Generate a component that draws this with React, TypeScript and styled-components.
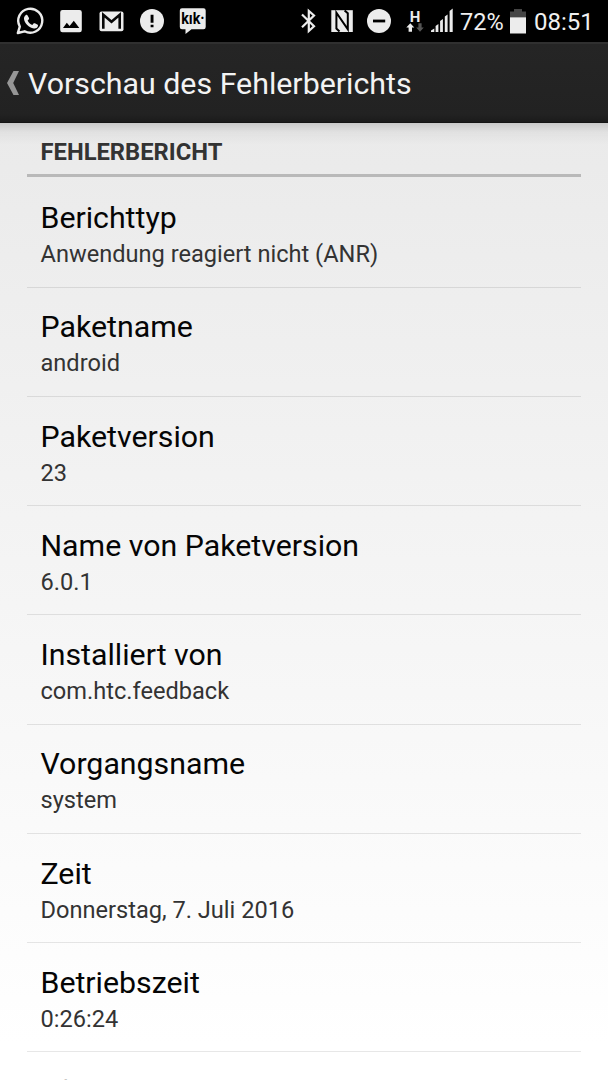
import React from "react";
import styled, { createGlobalStyle } from "styled-components";

const Global = createGlobalStyle`
  * { box-sizing: border-box; }
  html, body { margin: 0; padding: 0; background: #fff; }
  body { font-family: Roboto, sans-serif; overflow: hidden; }
`;

const Screen = styled.div`
  width: 608px;
  height: 1080px;
  overflow: hidden;
  display: flex;
  flex-direction: column;
`;

const StatusBar = styled.header`
  height: 42px;
  flex: none;
  background: #000;
  color: #f0f0f0;
  display: flex;
  justify-content: space-between;
`;

const StatusIcons = styled.svg`
  display: block;
  flex: none;
  fill: #ececec;
`;

const StatusInfo = styled.div`
  display: flex;
  width: 308px;
`;

const StatusText = styled.span<{ $width: number; $size: number }>`
  width: ${(p) => p.$width}px;
  font-size: ${(p) => p.$size}px;
  line-height: 44px;
  white-space: nowrap;
`;

const KikText = styled.text`
  font: 700 16.5px Roboto, sans-serif;
  fill: #000;
`;

const NetworkText = styled.text`
  font: 700 15px Roboto, sans-serif;
`;

const ActionBar = styled.div`
  height: 81px;
  flex: none;
  background: linear-gradient(#252525, #222 90%, #1b1b1b);
  border-top: 2px solid #303030;
  border-bottom: 1px solid #151515;
  display: flex;
  align-items: center;
  padding: 2px 0 0 7px;
`;

const BackArrow = styled.svg`
  width: 12px;
  height: 24px;
  margin: -2px 9px 0 0;
  fill: #969696;
`;

const BarTitle = styled.h1`
  margin: 0;
  font-size: 30.35px;
  font-weight: 400;
  line-height: 36px;
  color: #f3f3f3;
  white-space: nowrap;
`;

const Content = styled.main`
  flex: 1;
  min-height: 0;
  overflow: hidden;
  padding: 0 27px;
  background:
    linear-gradient(rgba(0, 0, 0, 0.14), rgba(0, 0, 0, 0.04) 9px, transparent 22px),
    linear-gradient(#eaeaea, #fff 920px);
`;

const SectionHeader = styled.h2`
  margin: 0;
  height: 54px;
  padding: 14.6px 13.5px 0;
  border-bottom: 3px solid #b9b9b9;
  font-size: 23.75px;
  line-height: 29px;
  font-weight: 700;
  color: #333;
`;

const Row = styled.section`
  height: 109.28px;
  padding: 20.9px 13.5px 0;
  border-bottom: 1.6px solid rgba(0, 0, 0, 0.095);
  white-space: nowrap;

  &:first-of-type {
    height: 110.5px;
    padding-top: 21.8px;
  }
`;

const RowTitle = styled.div`
  font-size: 30.3px;
  line-height: 38px;
  color: #050505;
`;

const RowValue = styled.div`
  font-size: 23.6px;
  line-height: 34px;
  color: #333;
`;

const rows = [
  ["Berichttyp", "Anwendung reagiert nicht (ANR)"],
  ["Paketname", "android"],
  ["Paketversion", "23"],
  ["Name von Paketversion", "6.0.1"],
  ["Installiert von", "com.htc.feedback"],
  ["Vorgangsname", "system"],
  ["Zeit", "Donnerstag, 7. Juli 2016"],
  ["Betriebszeit", "0:26:24"],
  ["Lf", ""],
];

export default function App() {
  return (
    <Screen>
      <Global />
      <StatusBar>
        <StatusIcons width="220" height="42" viewBox="0 0 220 42">
          <path d="M17.8 33 L19.8 26.6 A12 12 0 1 1 24.6 31.3 Z" fill="none" stroke="#ececec" strokeWidth="2.4" strokeLinejoin="round" />
          <path d="M25.6 15.2c.6-.6 1.6-.5 2 .2l1.4 2.6c.2.5.1 1-.3 1.400l-1.100 1.100c1 2.100 2.500 3.600 4.700 4.500l1.200-1.400c.4-.4.9-.5 1.400-.3l2.400 1.200c.7.4.9 1 .6 1.700-.7 1.700-2.200 2.500-4 2.200-5.200-.9-9.200-4.900-9.900-9.400-.2-1.500.5-2.900 1.600-3.800z" />
          <path fillRule="evenodd" d="M62.500 10H79.500A2.300 2.300 0 0 1 81.800 12.300V30A2.300 2.300 0 0 1 79.500 32.300H62.500A2.300 2.300 0 0 1 60.200 30V12.300A2.300 2.300 0 0 1 62.500 10ZM63 28H79.300L73.800 20.800L69.600 26L66.800 22.700Z" />
          <rect x="99.500" y="11.500" width="24" height="19.800" rx="2" />
          <path d="M103.300 28.800V14.800L111.500 21.700L119.700 14.800V28.800" fill="none" stroke="#080808" strokeWidth="2.600" />
          <circle cx="152" cy="21" r="12" />
          <path d="M150.600 14.800h2.900v8h-2.900zM150.600 24.700h2.900v2.600h-2.900z" fill="#000" />
          <path d="M182 8.300H203.500A2.200 2.200 0 0 1 205.700 10.500V27A2.200 2.200 0 0 1 203.500 29.200H191.500L185.500 34V29.200H182A2.200 2.200 0 0 1 179.800 27V10.500A2.200 2.200 0 0 1 182 8.300Z" />
          <KikText x="181.200" y="24.200" textLength="23.500" lengthAdjust="spacingAndGlyphs">kık·</KikText>
        </StatusIcons>
        <StatusInfo>
          <StatusIcons width="160" height="42" viewBox="300 0 160 42">
            <path d="M302 14.500L314 26.300L308.800 31V11L314 15.500L302 27.300" fill="none" stroke="#ececec" strokeWidth="2.200" />
            <path d="M331.300 10.200H352.800V32H331.300Z" />
            <path d="M339.500 31.500L336.400 28.500V12.800L347.800 29.300V13.300L344.600 10.500" fill="none" stroke="#000" strokeWidth="2" />
            <circle cx="379" cy="21" r="12" />
            <path d="M373 19.600h12.200v2.800H373z" fill="#000" />
            <NetworkText x="409.800" y="21.700">H</NetworkText>
            <path d="M410.300 23.200L414.300 27.600H412V31.800H408.600V27.600H406.300Z" />
            <path d="M420 31.800L416.200 27.400H418.400V23.200H421.600V27.400H423.800Z" fill="#555" />
            <path d="M431 32V30.500L434.300 28.500V32ZM435.600 32V26L438.400 24V32ZM440.100 32V21L442.900 19V32ZM444.800 32V16.500L447.600 14.500V32ZM449.600 32V11L452.700 8.500V32Z" />
          </StatusIcons>
          <StatusText $width={49} $size={23.5}>72%</StatusText>
          <StatusIcons width="25" height="42" viewBox="509 0 25 42">
            <path d="M514 9H522V11.500H526V17.500H510V11.500H514Z" fill="#454545" />
            <path d="M510 17.300H526V33.500H510Z" />
          </StatusIcons>
          <StatusText $width={74} $size={24}>08:51</StatusText>
        </StatusInfo>
      </StatusBar>
      <ActionBar>
        <BackArrow viewBox="0 0 12 24"><path d="M6.500 0H12L6.200 12L12 24H6.500L0 12Z" /></BackArrow>
        <BarTitle>Vorschau des Fehlerberichts</BarTitle>
      </ActionBar>
      <Content>
        <SectionHeader>FEHLERBERICHT</SectionHeader>
        {rows.map(([title, value]) => (
          <Row key={title}>
            <RowTitle>{title}</RowTitle>
            <RowValue>{value}</RowValue>
          </Row>
        ))}
      </Content>
    </Screen>
  );
}
